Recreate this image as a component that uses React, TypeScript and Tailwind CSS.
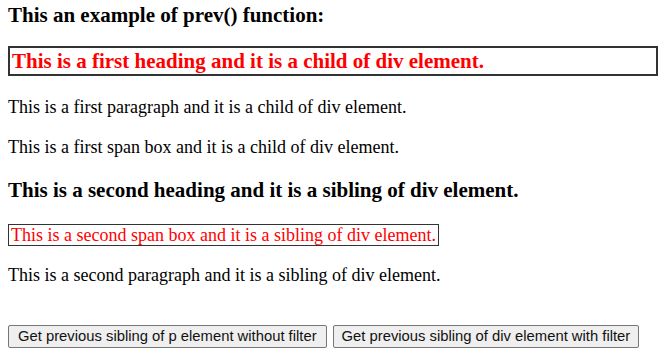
export default function App() {
  return (
    <div className="bg-white px-2 pt-[3px] text-black" style={{ fontFamily: '"Liberation Serif", "Times New Roman", serif' }}>
      <h3 className="text-[21px] font-bold leading-[24px]">This an example of prev() function:</h3>

      <div className="mt-[19px]">
        <h3 className="border-2 border-[#333] px-[2px] py-[1px] text-[21px] font-bold leading-[24px] text-[#ff0000]">
          This is a first heading and it is a child of div element.
        </h3>
        <p className="mt-[21px] text-[18px] leading-[20px]">This is a first paragraph and it is a child of div element.</p>
        <p className="mt-[20px] text-[18px] leading-[20px]">This is a first span box and it is a child of div element.</p>
      </div>

      <h3 className="mt-[21px] text-[21px] font-bold leading-[24px]">This is a second heading and it is a sibling of div element.</h3>

      <div className="mt-[22px] leading-[23px]">
        <span className="inline-block border-[1.5px] border-[#333] px-[2px] align-top text-[18px] leading-[20px] text-[#ff0000]">
          This is a second span box and it is a sibling of div element.
        </span>
      </div>

      <p className="mt-[18px] text-[18px] leading-[20px]">This is a second paragraph and it is a sibling of div element.</p>

      <div className="mt-[40px] flex gap-[6px]" style={{ fontFamily: '"Liberation Sans", Arial, sans-serif' }}>
        <button className="h-[23px] rounded-[2px] border border-[#767676] bg-[#efefef] px-[9px] text-[14.8px] leading-[21px] text-[#111]">
          Get previous sibling of p element without filter
        </button>
        <button className="h-[23px] rounded-[2px] border border-[#767676] bg-[#efefef] px-[8px] text-[14.8px] leading-[21px] text-[#111]">
          Get previous sibling of div element with filter
        </button>
      </div>
    </div>
  );
}
